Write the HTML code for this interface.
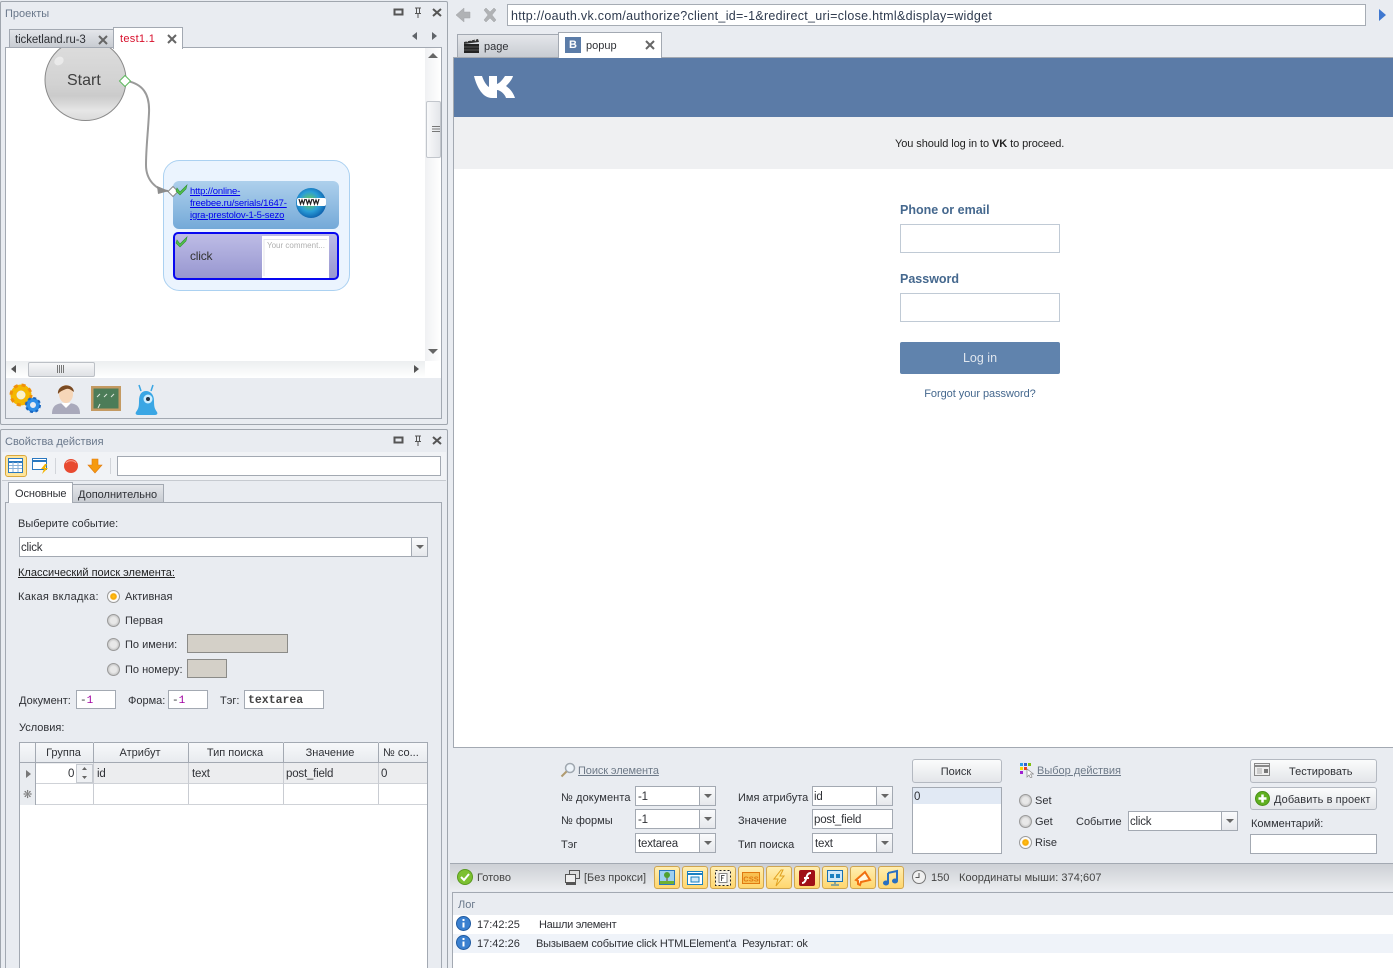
<!DOCTYPE html>
<html><head><meta charset="utf-8"><style>
html,body{margin:0;padding:0;width:1393px;height:968px;overflow:hidden}
body{position:relative;background:#e9ecf1;font-family:"Liberation Sans","Noto Sans CJK SC",sans-serif;font-size:11px;color:#2f3136}
#w{position:absolute;left:0;top:0;width:1393px;height:968px;overflow:hidden;background:#e9ecf1}
div,span,svg{box-sizing:border-box}
.a{position:absolute}
.t{position:absolute;white-space:nowrap;line-height:14px;margin-top:1px}
.f{font-size:11.500px;letter-spacing:-.2px}
.g{color:#69778a}
.u{text-decoration:underline}
.b{position:absolute;background:#fff;border:1px solid #a3a9b2}
.d{position:absolute;background:#d4d0c8;border:1px solid #8b8b88}
.s{position:absolute;top:0;bottom:0;right:0;border-left:1px solid #a3a9b2;background:linear-gradient(#fafbfc,#e6e8ec)}
.s:after{content:"";position:absolute;left:4px;top:7px;border:4px solid transparent;border-top:4px solid #666;border-bottom:0}
.btn{position:absolute;border:1px solid #b4b9c1;border-radius:3px;background:linear-gradient(#fbfcfc,#e3e5e9)}
.m{font-family:"Liberation Mono",monospace;font-size:11px}
.r{position:absolute;width:13px;height:13px;border-radius:50%;border:1px solid #9a9a9a;background:radial-gradient(circle,#e8e8e8 0,#e8e8e8 40%,#c8c8c8 70%,#f4f4f4 100%)}
.r.on{background:radial-gradient(circle,#ffc21e 0,#f7a800 35%,#fff 50%,#e6e6e6 100%)}
.y{position:absolute;top:866px;width:26px;height:23px;border:1px solid #cfa550;border-radius:3px;background:linear-gradient(#ffeeb0,#ffd66e)}
.y svg{position:absolute;left:3px;top:2px}
.v{position:absolute;top:742px;width:1px;background:#c9ccd2;height:62px}
</style></head><body><div id="w">

<!-- top-left panel -->
<div class="a" style="left:0;top:1px;width:448px;height:424px;border:1px solid #a0a6ae;border-radius:2px"></div>
<div class="t g" style="left:5px;top:6px">Проекты</div>
<svg class="a" style="left:392px;top:6px" width="50" height="14"><path d="M2.500 3.500h8v5h-8z" fill="none" stroke="#555" stroke-width="2"/><path d="M23 2h6M24.500 2v5M27.500 2v5M23 7.500h6M26 8v4" stroke="#555" fill="none"/><path d="M41 3l8 7M49 3l-8 7" stroke="#555" stroke-width="2"/></svg>
<div class="a" style="left:9px;top:29px;width:105px;height:19px;border:1px solid #a3a9b2;background:linear-gradient(#e4e6ea,#c8ccd2)"></div>
<div class="t" style="left:15px;top:32px;font-size:11.500px;letter-spacing:-.1px">ticketland.ru-3</div>
<svg class="a" style="left:98px;top:35px" width="10" height="10"><path d="M1 1l8 8M9 1l-8 8" stroke="#666" stroke-width="2"/></svg>
<div class="a" style="left:113px;top:27px;width:70px;height:22px;border:1px solid #a3a9b2;border-bottom:0;background:#fff;z-index:3"></div>
<div class="t" style="left:120px;top:31px;color:#d8102c;font-size:11px;letter-spacing:.3px;z-index:4">test1.1</div>
<svg class="a" style="left:167px;top:34px;z-index:4" width="10" height="10"><path d="M1 1l8 8M9 1l-8 8" stroke="#666" stroke-width="2"/></svg>
<svg class="a" style="left:410px;top:31px" width="30" height="11"><path d="M7 1v8L2 5zM22 1v8l5-4z" fill="#606469"/></svg>

<!-- canvas -->
<div class="a" style="left:5px;top:47px;width:437px;height:372px;border:1px solid #a3a9b2;background:#e9ecf1;overflow:hidden">
 <div class="a" style="left:0;top:0;width:419px;height:313px;background:#fff"></div>
 <div class="a" style="left:419px;top:0;width:16px;height:330px;background:linear-gradient(90deg,#f0f1f3,#fff)"></div>
 <div class="a" style="left:0;top:313px;width:435px;height:17px;background:linear-gradient(#eceef0,#fff)"></div>
 <div class="a" style="left:419px;top:313px;width:16px;height:17px;background:#fff"></div>
 <div class="a" style="left:420px;top:53px;width:15px;height:57px;border:1px solid #c2c6cc;border-radius:2px;background:linear-gradient(90deg,#f8f9fa,#e4e6ea)"></div>
 <svg class="a" style="left:426px;top:78px" width="9" height="8"><path d="M0 .5h8M0 3h8M0 5.500h8" stroke="#777"/></svg>
 <svg class="a" style="left:421px;top:4px" width="12" height="8"><path d="M1 6h10L6 1z" fill="#666"/></svg>
 <svg class="a" style="left:421px;top:300px" width="12" height="8"><path d="M1 1h10L6 6z" fill="#666"/></svg>
 <div class="a" style="left:22px;top:314px;width:67px;height:15px;border:1px solid #bcc0c6;border-radius:2px;background:linear-gradient(#f6f7f8,#dfe1e5)"></div>
 <svg class="a" style="left:51px;top:317px" width="8" height="9"><path d="M.5 0v8M2.500 0v8M4.500 0v8M6.500 0v8" stroke="#777"/></svg>
 <svg class="a" style="left:4px;top:316px" width="8" height="10"><path d="M6 1v8L1 5z" fill="#555"/></svg>
 <svg class="a" style="left:406px;top:316px" width="8" height="10"><path d="M2 1v8l5-4z" fill="#555"/></svg>
 <svg class="a" style="left:0;top:0" width="419" height="313">
  <defs>
   <linearGradient id="c" x1="0" y1="0" x2="0" y2="1"><stop offset="0" stop-color="#dedede"/><stop offset=".55" stop-color="#d2d2d2"/><stop offset=".7" stop-color="#cbcbcb"/><stop offset=".88" stop-color="#e6e6e6"/><stop offset="1" stop-color="#dadada"/></linearGradient>
   <radialGradient id="gl" cx=".45" cy=".45" r=".6"><stop offset="0" stop-color="#6fd04a"/><stop offset=".55" stop-color="#2a9ed8"/><stop offset="1" stop-color="#0a5aa8"/></radialGradient>
   <linearGradient id="n1" x1="0" y1="0" x2="0" y2="1"><stop offset="0" stop-color="#aed0ec"/><stop offset="1" stop-color="#74a9d8"/></linearGradient>
   <linearGradient id="n2" x1="0" y1="0" x2="0" y2="1"><stop offset="0" stop-color="#bebde6"/><stop offset="1" stop-color="#9796d0"/></linearGradient>
  </defs>
  <circle cx="79.500" cy="32" r="40.500" fill="url(#c)" stroke="#8a8a8a"/>
  <ellipse cx="53" cy="13" rx="5" ry="4" fill="#f2f2f2" opacity=".7" transform="rotate(-35 53 13)"/>
  <rect x="157.500" y="112.500" width="186" height="130" rx="16" fill="#ebf4fe" stroke="#abd1f1"/>
  <path d="M121 33C136 36 144 45 143 65C142 85 140 100 140 117C140 132 150 142 162 143" fill="none" stroke="#9a9a9a" stroke-width="2"/>
  <rect x="167" y="133" width="166" height="48" rx="6" fill="url(#n1)"/>
  <rect x="168" y="185" width="164" height="46" rx="4" fill="url(#n2)" stroke="#0808f0" stroke-width="2"/>
  <path d="M151 138l12 5-11 3z" fill="#8c8c8c"/>
  <rect x="256" y="188" width="67" height="42" fill="#fff"/>
  <path d="M258 191.500h63" stroke="#e4e6ea"/>
  <path d="M258 191v37" stroke="#e4e6ea"/>
  <path d="M119 27.500l5.500 5.500-5.500 5.500-5.500-5.500z" fill="#fff" stroke="#5cb85c"/>
  <path d="M167 138.500l5 5-5 5-5-5z" fill="#fff" stroke="#8a8a8a"/>
  <path d="M171 140l3 4 7-7-1 4-6 6-4-4z" fill="#52c04a" stroke="#2f8f2f" stroke-width=".6"/>
  <path d="M171 192l3 4 7-7-1 4-6 6-4-4z" fill="#52c04a" stroke="#2f8f2f" stroke-width=".6"/>
  <circle cx="305" cy="155" r="15" fill="url(#gl)"/>
  <rect x="291" y="150" width="29" height="8" rx="2" fill="#fff"/>
  <path d="M293 151l1.500 5 1.500-4 1.500 4 1.500-5M300 151l1.500 5 1.500-4 1.500 4 1.500-5M307 151l1.500 5 1.500-4 1.500 4 1.500-5" fill="none" stroke="#222" stroke-width="1.200"/>
 </svg>
 <div class="t" style="left:61px;top:23px;font-size:16px;line-height:18px;color:#404040">Start</div>
 <div class="t u" style="left:184px;top:137px;font-size:9.500px;letter-spacing:-.15px;line-height:12px;color:#0000ee;z-index:3">http://online-<br>freebee.ru/serials/1647-<br>igra-prestolov-1-5-sezo</div>
 <div class="t" style="left:184px;top:200px;font-size:12px;letter-spacing:-.2px;color:#333">click</div>
 <div class="t" style="left:261px;top:190px;font-size:8px;color:#b0b0b0">Your comment...</div>
 <!-- bottom icons -->
 <svg class="a" style="left:3px;top:334px" width="150" height="36">
  <circle cx="12" cy="13" r="7.500" fill="none" stroke="#f5b800" stroke-width="6"/><circle cx="12" cy="13" r="10" fill="none" stroke="#f0900c" stroke-width="3" stroke-dasharray="4 3.900"/><circle cx="12" cy="13" r="3.500" fill="#fff3c0"/>
  <circle cx="24" cy="23" r="5" fill="none" stroke="#2f8fe8" stroke-width="4"/><circle cx="24" cy="23" r="7" fill="none" stroke="#1a66c0" stroke-width="2" stroke-dasharray="3 2.500"/>
  <path d="M43 32c0-9 5-11 14-11s14 2 14 11z" fill="#a9a9bb"/><path d="M52 21l5 5 5-5z" fill="#fff"/>
  <ellipse cx="57" cy="12" rx="7" ry="9" fill="#f6d6b8"/><path d="M49 12c-1-10 15-12 16-2-3-2-5-4-8-3-2 1-6 2-8 5z" fill="#7a4a22"/>
  <rect x="82" y="4" width="30" height="25" fill="#c49a62"/><rect x="84.500" y="6.500" width="25" height="20" fill="#4c7c58"/>
  <path d="M88 15l3-3M95 15l3-3M102 15l3-3M89 26l2-4" stroke="#dfe8dd"/>
  <path d="M130 33c-3 0-4-1-3-3 2-3 3-4 3-11 0-7 3-10 7-10s8 3 8 10c0 7 1 8 3 11 1 2 0 3-3 3z" fill="#3aa6e4"/>
  <path d="M132 9l-2-6M142 9l2-6" stroke="#3aa6e4" stroke-width="1.500"/>
  <circle cx="139" cy="17" r="4.500" fill="#cdeeff"/><circle cx="139" cy="17" r="2" fill="#234"/>
 </svg>
</div>

<!-- bottom-left panel -->
<div class="a" style="left:0;top:429px;width:448px;height:545px;border:1px solid #a0a6ae;border-radius:2px"></div>
<div class="t g" style="left:5px;top:434px">Свойства действия</div>
<svg class="a" style="left:392px;top:434px" width="50" height="14"><path d="M2.500 3.500h8v5h-8z" fill="none" stroke="#555" stroke-width="2"/><path d="M23 2h6M24.500 2v5M27.500 2v5M23 7.500h6M26 8v4" stroke="#555" fill="none"/><path d="M41 3l8 7M49 3l-8 7" stroke="#555" stroke-width="2"/></svg>
<div class="a" style="left:2px;top:452px;width:444px;height:29px;background:#f1f3f6;border-bottom:1px solid #c6cad0"></div>
<div class="a" style="left:5px;top:455px;width:22px;height:22px;border:1px solid #d8a840;border-radius:3px;background:#ffe59a"></div>
<svg class="a" style="left:8px;top:458px" width="104" height="17">
 <rect x=".5" y=".5" width="14" height="14" fill="#fff" stroke="#2a78c0"/><path d="M1 4h13" stroke="#2a78c0" stroke-width="2"/><path d="M1 7.500h13M1 10.500h13M5 4v10M10 4v10" stroke="#8ab2d8"/>
 <rect x="24.500" y=".5" width="14" height="11" fill="#fff" stroke="#2a78c0"/><path d="M25 3h13" stroke="#2a78c0" stroke-width="2"/><path d="M37 6l-4 5h3l-2 5 6-6h-3l2-4z" fill="#f5b400"/>
 <path d="M47.500 0v16" stroke="#d2d5da"/><circle cx="63" cy="8" r="7" fill="#e84a30"/><path d="M58 5c2-3 8-3 10 0" stroke="#f8a090" fill="none"/>
 <path d="M84 1h6v6h4l-7 8-7-8h4z" fill="#f59a10" stroke="#e07a10" stroke-width=".6"/><path d="M102.500 0v16" stroke="#d2d5da"/>
</svg>
<div class="b" style="left:117px;top:456px;width:324px;height:20px"></div>
<div class="a" style="left:8px;top:482px;width:65px;height:21px;border:1px solid #a3a9b2;border-bottom:0;background:#fff;z-index:3"></div>
<div class="t" style="left:15px;top:486px;z-index:4;letter-spacing:-.1px">Основные</div>
<div class="a" style="left:72px;top:484px;width:92px;height:19px;border:1px solid #a3a9b2;background:linear-gradient(#e4e6ea,#c8ccd2)"></div>
<div class="t" style="left:78px;top:487px">Дополнительно</div>
<div class="a" style="left:5px;top:502px;width:437px;height:480px;border:1px solid #a3a9b2"></div>

<div class="t" style="left:18px;top:516px">Выберите событие:</div>
<div class="b" style="left:19px;top:537px;width:409px;height:20px"><span class="s" style="width:16px"></span></div>
<div class="t f" style="left:21px;top:540px">click</div>
<div class="t u" style="left:18px;top:565px;color:#222">Классический поиск элемента:</div>
<div class="t" style="left:18px;top:589px;letter-spacing:.3px">Какая вкладка:</div>
<div class="r on" style="left:107px;top:590px"></div><div class="t" style="left:125px;top:589px">Активная</div>
<div class="r" style="left:107px;top:614px"></div><div class="t" style="left:125px;top:613px">Первая</div>
<div class="r" style="left:107px;top:638px"></div><div class="t" style="left:125px;top:637px">По имени:</div>
<div class="r" style="left:107px;top:663px"></div><div class="t" style="left:125px;top:662px">По номеру:</div>
<div class="d" style="left:187px;top:634px;width:101px;height:19px"></div>
<div class="d" style="left:187px;top:659px;width:40px;height:19px"></div>
<div class="t" style="left:19px;top:693px">Документ:</div>
<div class="b" style="left:76px;top:690px;width:40px;height:19px"></div>
<div class="t m" style="left:80px;top:693px">-<span style="color:#a000a0">1</span></div>
<div class="t" style="left:128px;top:693px">Форма:</div>
<div class="b" style="left:168px;top:690px;width:40px;height:19px"></div>
<div class="t m" style="left:172px;top:693px">-<span style="color:#a000a0">1</span></div>
<div class="t" style="left:220px;top:693px">Тэг:</div>
<div class="b" style="left:244px;top:690px;width:80px;height:19px"></div>
<div class="t m" style="left:248px;top:693px;font-size:11.500px;font-weight:bold;color:#444">textarea</div>
<div class="t" style="left:19px;top:720px">Условия:</div>

<!-- grid -->
<div class="b" style="left:19px;top:742px;width:409px;height:240px"></div>
<div class="a" style="left:20px;top:743px;width:407px;height:20px;background:linear-gradient(#f7f8fa,#e8ebef);border-bottom:1px solid #a3a9b2"></div>
<div class="a" style="left:20px;top:763px;width:407px;height:21px;background:#ecedef;border-bottom:1px solid #cfd2d7"></div>
<div class="a" style="left:20px;top:784px;width:407px;height:21px;border-bottom:1px solid #cfd2d7"></div>
<div class="a" style="left:20px;top:763px;width:16px;height:42px;background:#e9ecf0;border-right:1px solid #a3a9b2"></div>
<div class="a" style="left:36px;top:764px;width:57px;height:19px;background:#fff"></div>
<div class="v" style="left:35px;background:#a3a9b2"></div><div class="v" style="left:93px"></div><div class="v" style="left:188px"></div><div class="v" style="left:283px"></div><div class="v" style="left:378px"></div>
<div class="a" style="left:35px;top:743px;width:1px;height:20px;background:#a3a9b2"></div><div class="a" style="left:93px;top:743px;width:1px;height:20px;background:#a3a9b2"></div><div class="a" style="left:188px;top:743px;width:1px;height:20px;background:#a3a9b2"></div><div class="a" style="left:283px;top:743px;width:1px;height:20px;background:#a3a9b2"></div><div class="a" style="left:378px;top:743px;width:1px;height:20px;background:#a3a9b2"></div>
<div class="t" style="left:36px;width:55px;text-align:center;top:745px">Группа</div>
<div class="t" style="left:94px;width:92px;text-align:center;top:745px">Атрибут</div>
<div class="t" style="left:189px;width:92px;text-align:center;top:745px">Тип поиска</div>
<div class="t" style="left:284px;width:92px;text-align:center;top:745px">Значение</div>
<div class="t" style="left:383px;top:745px">№ со...</div>
<svg class="a" style="left:25px;top:769px" width="8" height="10"><path d="M1 1v8l5-4z" fill="#777"/></svg>
<div class="t" style="left:23px;top:787px;color:#777;font-size:11px">❋</div>
<div class="t f" style="left:68px;top:766px">0</div>
<div class="a" style="left:76px;top:764px;width:17px;height:19px;border:1px solid #c6cad0;background:#eef0f3"></div>
<svg class="a" style="left:81px;top:766px" width="7" height="15"><path d="M1 4h5L3.500 1zM1 10h5l-2.500 3z" fill="#666"/></svg>
<div class="t f" style="left:97px;top:766px">id</div>
<div class="t f" style="left:192px;top:766px">text</div>
<div class="t f" style="left:286px;top:766px">post_field</div>
<div class="t f" style="left:381px;top:766px">0</div>

<!-- browser top -->
<svg class="a" style="left:455px;top:6px" width="46" height="18">
 <path d="M1 9l8-7v4h6v6H9v4z" fill="#b0b2b5" stroke="#a2a4a7" stroke-width=".5"/>
 <path d="M29 4l2-2 4 4 4-4 2 2-4 5 4 5-2 2-4-4-4 4-2-2 4-5z" fill="#b0b2b5" stroke="#a2a4a7" stroke-width=".5"/>
</svg>
<div class="b" style="left:507px;top:4px;width:859px;height:22px;border-color:#a6acb4"></div>
<div class="t" style="left:511px;top:8px;font-size:12.500px;letter-spacing:.3px;color:#2e3a4e">http://oauth.vk.com/authorize?client_id=-1&amp;redirect_uri=close.html&amp;display=widget</div>
<svg class="a" style="left:1378px;top:8px" width="10" height="14"><path d="M1 1v12l7-6z" fill="#3f78d0"/></svg>

<div class="a" style="left:457px;top:34px;width:103px;height:24px;border:1px solid #a3a9b2;background:linear-gradient(#e4e6ea,#c8ccd2)"></div>
<svg class="a" style="left:463px;top:38px" width="17" height="16"><path d="M1 6h15v9H1z" fill="#222"/><path d="M1 4l14-3 1 3-15 2z" fill="#333"/><path d="M4 4l1-2M8 3l1-2M12 3l1-2" stroke="#ddd"/><path d="M1 9h15M1 12h15" stroke="#555"/></svg>
<div class="t" style="left:484px;top:39px">page</div>
<div class="a" style="left:558px;top:32px;width:104px;height:26px;border:1px solid #a3a9b2;border-bottom:0;background:#fff;z-index:3"></div>
<div class="a" style="left:565px;top:37px;width:16px;height:16px;background:#5b7ca8;z-index:4"></div>
<div class="t" style="left:565px;top:37px;width:16px;text-align:center;color:#fff;font-weight:bold;z-index:5">B</div>
<div class="t" style="left:586px;top:38px;z-index:4">popup</div>
<svg class="a" style="left:645px;top:40px;z-index:4" width="11" height="11"><path d="M1 1l8 8M9 1l-8 8" stroke="#666" stroke-width="2"/></svg>

<!-- VK page -->
<div class="a" style="left:453px;top:57px;width:940px;height:691px;background:#fff;border-left:1px solid #a3a9b2;border-bottom:1px solid #a3a9b2;border-top:1px solid #a3a9b2"></div>
<div class="a" style="left:454px;top:58px;width:939px;height:59px;background:#5b7ba7"></div>
<svg class="a" style="left:454px;top:58px" width="80" height="59"><path transform="translate(-454 -58)" d="M474 76L482 76C484 82 487 86 489 87L489 76L497 76L497 84C500 83 503 79 505 76L513 76C512 80 508 84 506 86C509 88 513 92 515 98L506 98C505 94 500 90 497 90L497 98L492 98C483 98 477 88 474 76Z" fill="#fff"/></svg>
<div class="a" style="left:454px;top:117px;width:939px;height:52px;background:#eff0f2"></div>
<div class="t" style="left:895px;top:136px;font-size:11px;letter-spacing:-.08px;color:#222">You should log in to <b>VK</b> to proceed.</div>
<div class="t" style="left:900px;top:202px;font-size:12.500px;font-weight:bold;color:#45688e">Phone or email</div>
<div class="a" style="left:900px;top:224px;width:160px;height:29px;background:#fff;border:1px solid #c0cad5"></div>
<div class="t" style="left:900px;top:271px;font-size:12.500px;font-weight:bold;color:#45688e">Password</div>
<div class="a" style="left:900px;top:293px;width:160px;height:29px;background:#fff;border:1px solid #c0cad5"></div>
<div class="a" style="left:900px;top:342px;width:160px;height:32px;background:#6083ad;border-radius:2px"></div>
<div class="t" style="left:900px;width:160px;text-align:center;top:350px;font-size:12.500px;color:#dfe6ee">Log in</div>
<div class="t" style="left:900px;width:160px;text-align:center;top:386px;font-size:11px;letter-spacing:-.05px;color:#45688e">Forgot your password?</div>

<!-- search panel -->
<svg class="a" style="left:560px;top:762px" width="16" height="16"><circle cx="10" cy="6" r="4.500" fill="#eef4fa" stroke="#a0a8b0" stroke-width="1.500"/><path d="M6.500 9.500L1.500 14.500" stroke="#b09a70" stroke-width="2"/></svg>
<div class="t u" style="left:578px;top:763px;color:#6e7a88;letter-spacing:-.1px">Поиск элемента</div>
<div class="t" style="left:561px;top:790px;letter-spacing:.1px">№ документа</div>
<div class="t" style="left:561px;top:813px">№ формы</div>
<div class="t" style="left:561px;top:837px">Тэг</div>
<div class="b" style="left:635px;top:786px;width:81px;height:20px"><span class="s" style="width:16px"></span></div><div class="t f" style="left:638px;top:789px">-1</div>
<div class="b" style="left:635px;top:809px;width:81px;height:20px"><span class="s" style="width:16px"></span></div><div class="t f" style="left:638px;top:812px">-1</div>
<div class="b" style="left:635px;top:833px;width:81px;height:20px"><span class="s" style="width:16px"></span></div><div class="t f" style="left:638px;top:836px">textarea</div>
<div class="t" style="left:738px;top:790px">Имя атрибута</div>
<div class="t" style="left:738px;top:813px">Значение</div>
<div class="t" style="left:738px;top:837px">Тип поиска</div>
<div class="b" style="left:812px;top:786px;width:81px;height:20px"><span class="s" style="width:16px"></span></div><div class="t f" style="left:814px;top:789px">id</div>
<div class="b" style="left:812px;top:809px;width:81px;height:20px"></div><div class="t f" style="left:814px;top:812px">post_field</div>
<div class="b" style="left:812px;top:833px;width:81px;height:20px"><span class="s" style="width:16px"></span></div><div class="t f" style="left:815px;top:836px">text</div>
<div class="btn" style="left:912px;top:759px;width:90px;height:24px"></div><div class="t" style="left:911px;width:90px;text-align:center;top:764px">Поиск</div>
<div class="b" style="left:912px;top:787px;width:90px;height:67px"></div>
<div class="a" style="left:913px;top:788px;width:88px;height:16px;background:#e1e9f4"></div>
<div class="t f" style="left:914px;top:789px">0</div>

<svg class="a" style="left:1019px;top:761px" width="15" height="17"><path d="M1 2h3v3H1z" fill="#2a9be8"/><path d="M5 2h3v3H5z" fill="#3060d0"/><path d="M9 2h3v3H9z" fill="#80c010"/><path d="M1 6h3v3H1z" fill="#f8d800"/><path d="M5 6h3v3H5z" fill="#e84020"/><path d="M1 10h3v3H1z" fill="#a020d0"/><path d="M8 8v8l2-2 1.500 3 1.500-1-1.500-3h3z" fill="#fff" stroke="#888" stroke-width=".7"/></svg>
<div class="t u" style="left:1037px;top:763px;color:#6e7a88">Выбор действия</div>
<div class="r" style="left:1019px;top:794px"></div><div class="t" style="left:1035px;top:793px">Set</div>
<div class="r" style="left:1019px;top:815px"></div><div class="t" style="left:1035px;top:814px">Get</div>
<div class="r on" style="left:1019px;top:836px"></div><div class="t" style="left:1035px;top:835px">Rise</div>
<div class="t" style="left:1076px;top:814px">Событие</div>
<div class="b" style="left:1128px;top:811px;width:110px;height:20px"><span class="s" style="width:16px"></span></div><div class="t f" style="left:1130px;top:814px">click</div>
<div class="btn" style="left:1250px;top:759px;width:127px;height:24px"></div>
<svg class="a" style="left:1254px;top:763px" width="17" height="14"><rect x=".5" y=".5" width="15" height="12" fill="#eee" stroke="#888"/><path d="M1 3h14" stroke="#888" stroke-width="2"/><path d="M3 6h5M3 8h5M3 10h5" stroke="#aaa"/><rect x="10" y="6" width="4" height="4" fill="#777"/></svg>
<div class="t" style="left:1289px;top:764px">Тестировать</div>
<div class="btn" style="left:1250px;top:787px;width:127px;height:23px"></div>
<svg class="a" style="left:1255px;top:791px" width="15" height="15"><circle cx="7.500" cy="7.500" r="7" fill="#60b020" stroke="#4a9018"/><path d="M7.500 3.500v8M3.500 7.500h8" stroke="#fff" stroke-width="2.500"/></svg>
<div class="t" style="left:1274px;top:792px;letter-spacing:.1px">Добавить в проект</div>
<div class="t" style="left:1251px;top:816px">Комментарий:</div>
<div class="b" style="left:1250px;top:834px;width:127px;height:20px"></div>

<!-- status bar -->
<div class="a" style="left:450px;top:863px;width:943px;height:28px;background:linear-gradient(#cdd0d5,#eceef1);border-top:1px solid #a3a9b2"></div>
<svg class="a" style="left:457px;top:869px" width="16" height="16"><circle cx="8" cy="8" r="7.500" fill="#7cc030" stroke="#5a9a20"/><path d="M4 8l3 3 5-6" fill="none" stroke="#fff" stroke-width="2"/></svg>
<div class="t g" style="left:477px;top:870px;color:#444">Готово</div>
<svg class="a" style="left:564px;top:869px" width="16" height="16"><rect x="5.500" y="1.500" width="10" height="8" fill="#ddd" stroke="#555"/><rect x="1.500" y="5.500" width="10" height="8" fill="#eee" stroke="#555"/><path d="M2 15h10" stroke="#555" stroke-width="2"/></svg>
<div class="t" style="left:584px;top:870px;color:#444">[Без прокси]</div>
<div class="y" style="left:654px"><svg width="18" height="18"><rect x="1.500" y="1.500" width="15" height="14" fill="#9ed0f0" stroke="#2a78c0"/><path d="M2 15v-3h14v3z" fill="#70b030"/><path d="M9 12V7" stroke="#6a4a20"/><circle cx="9" cy="6" r="3" fill="#50a030"/></svg></div>
<div class="y" style="left:682px"><svg width="18" height="18"><rect x="1.500" y="2.500" width="15" height="13" fill="#fff" stroke="#1a80c0"/><path d="M2 5h14" stroke="#1a80c0" stroke-width="2"/><rect x="5" y="8" width="8" height="5" fill="#cfe8f8" stroke="#1a80c0"/></svg></div>
<div class="y" style="left:710px"><svg width="18" height="18"><rect x="1.500" y="1.500" width="15" height="15" fill="#f4f0e4" stroke="#222" stroke-dasharray="2 2"/><rect x="5" y="4.500" width="8" height="9" fill="#fff" stroke="#888"/><path d="M7.500 12V6.500h3M7.500 9h2" stroke="#555" fill="none"/></svg></div>
<div class="y" style="left:738px"><svg width="18" height="18"><rect x=".5" y="3.500" width="17" height="11" fill="#f8c050" stroke="#e07a10"/><text x="9" y="12.500" font-size="7.500" font-weight="bold" text-anchor="middle" fill="#e07a10" font-family="Liberation Sans">CSS</text></svg></div>
<div class="y" style="left:766px"><svg width="18" height="18"><path d="M11 1L4 10h4l-2 7 8-10h-4l3-6z" fill="#ffe890" stroke="#e0a020"/></svg></div>
<div class="y" style="left:794px"><svg width="18" height="18"><rect x="1" y="1" width="16" height="16" rx="2" fill="#a01018"/><path d="M13 4c-4 0-4 3-5 6s-2 4-4 4M6 9h5" fill="none" stroke="#fff" stroke-width="2"/></svg></div>
<div class="y" style="left:822px"><svg width="18" height="18"><rect x="1.500" y="1.500" width="15" height="11" fill="#cfe8f8" stroke="#1a70b0"/><path d="M4 5h4v4H4zM10 5h4v4h-4z" fill="#1a80c0"/><path d="M9 13v2M5 16h8" stroke="#1a70b0"/></svg></div>
<div class="y" style="left:850px"><svg width="18" height="18"><path d="M2 11l9-8 5 8-9 2-1 3-2-1 0-3z" fill="#fff8e0" stroke="#f07010" stroke-width="2"/></svg></div>
<div class="y" style="left:878px"><svg width="18" height="18"><path d="M6 4l9-2v10" fill="none" stroke="#2a70c0" stroke-width="2"/><path d="M6 4v10" stroke="#2a70c0" stroke-width="2"/><ellipse cx="4" cy="14" rx="3" ry="2.500" fill="#2a70c0"/><ellipse cx="13" cy="12" rx="3" ry="2.500" fill="#2a70c0"/></svg></div>
<svg class="a" style="left:911px;top:869px" width="16" height="16"><circle cx="8" cy="8" r="6.500" fill="#f0f0f0" stroke="#777"/><path d="M8 4v4.500H4.500" fill="none" stroke="#555"/></svg>
<div class="t" style="left:931px;top:870px;color:#444">150</div>
<div class="t" style="left:959px;top:870px;color:#444;letter-spacing:.05px">Координаты мыши: 374;607</div>

<!-- log -->
<div class="a" style="left:452px;top:892px;width:941px;height:76px;background:#fff;border-left:1px solid #a3a9b2;border-top:1px solid #a3a9b2"></div>
<div class="a" style="left:453px;top:893px;width:940px;height:22px;background:#e9ecf1"></div>
<div class="a" style="left:453px;top:934px;width:940px;height:19px;background:#eff3f9"></div>
<div class="t g" style="left:458px;top:897px">Лог</div>
<svg class="a" style="left:456px;top:916px" width="16" height="16"><circle cx="7.500" cy="7.500" r="7" fill="#3a80d0" stroke="#1f5aa0"/><path d="M7.500 3v2M7.500 6.500v5" stroke="#fff" stroke-width="2"/></svg>
<svg class="a" style="left:456px;top:935px" width="16" height="16"><circle cx="7.500" cy="7.500" r="7" fill="#3a80d0" stroke="#1f5aa0"/><path d="M7.500 3v2M7.500 6.500v5" stroke="#fff" stroke-width="2"/></svg>
<div class="t" style="left:477px;top:917px">17:42:25</div>
<div class="t" style="left:539px;top:917px;letter-spacing:-.3px">Нашли элемент</div>
<div class="t" style="left:477px;top:936px">17:42:26</div>
<div class="t" style="left:536px;top:936px;letter-spacing:-.16px">Вызываем событие click HTMLElement'a&nbsp; Результат: ok</div>
</div></body></html>
